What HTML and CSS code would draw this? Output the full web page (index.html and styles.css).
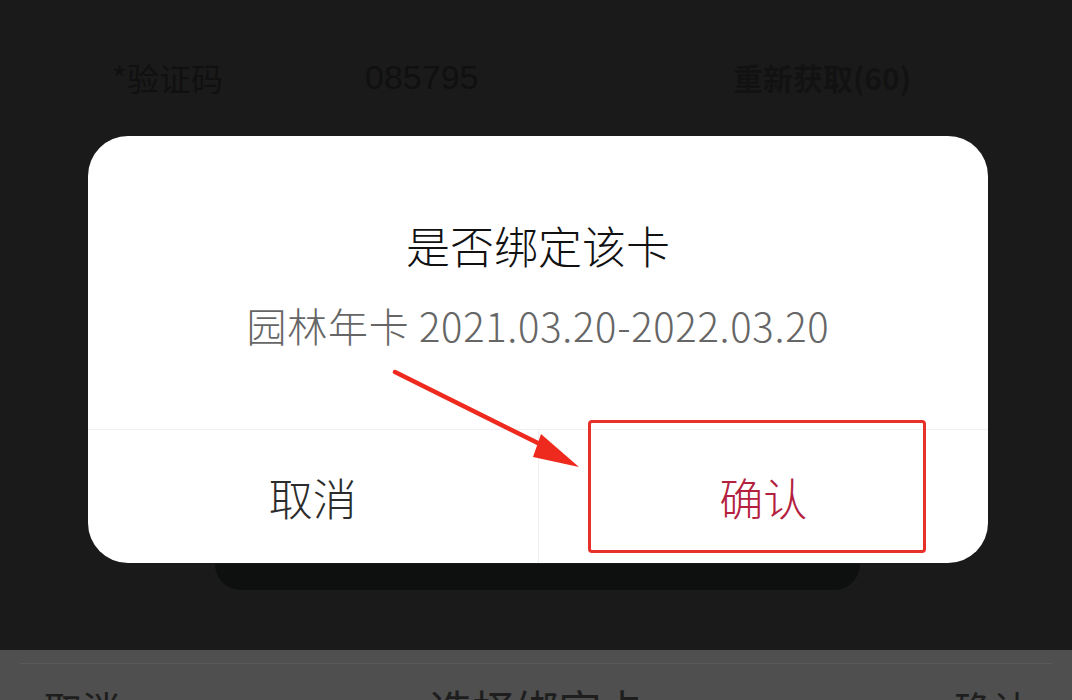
FILE: index.html
```html
<!DOCTYPE html>
<html lang="zh-CN">
<head>
    <meta charset="UTF-8">
    <meta name="viewport" content="width=device-width, initial-scale=1.0">
    <title>是否绑定该卡</title>
    <link rel="stylesheet" href="styles.css">
</head>
<body>

<div class="page">
    <div class="form-row">
        <span class="form-label">*验证码</span>
        <span class="form-value">085795</span>
        <span class="form-resend">重新获取(60)</span>
    </div>
    <div class="card-shadow"></div>
    <div class="sheet">
        <div class="sheet-head">
            <span class="sheet-btn">取消</span>
            <span class="sheet-title">选择绑定卡</span>
            <span class="sheet-btn">确认</span>
        </div>
    </div>
</div>

<div class="mask">
    <div class="dialog">
        <div class="dialog-body">
            <h2 class="dialog-title">是否绑定该卡</h2>
            <p class="dialog-desc">园林年卡 2021.03.20-2022.03.20</p>
        </div>
        <div class="dialog-actions">
            <button type="button" class="btn-cancel">取消</button>
            <button type="button" class="btn-ok">确认</button>
        </div>

        <!-- annotation drawn over the screenshot -->
        <div class="mark-box"></div>
        <svg class="mark-arrow" width="200" height="110" viewBox="0 0 200 110">
            <path d="M7 6 L168 86" stroke="#ee2a1f" stroke-width="4.5" stroke-linecap="round" fill="none"/>
            <path d="M153 68 L191 101 L145 91 Z" fill="#ee2a1f"/>
        </svg>
    </div>
</div>

</body>
</html>
```

FILE: styles.css
```css
/* Base */
body {
    margin: 0;
    height: 700px;
    overflow: hidden;
    background-color: #1a1a1a;
    font-family: "Noto Sans CJK SC", "Noto Sans", sans-serif;
}

/* Page behind the dialog */
.page {
    height: 700px;
    display: flex;
    flex-direction: column;
}
.form-row {
    display: flex;
    align-items: center;
    padding: 52px 0 0 112px;
    height: 50px;
    color: #101010;
    font-size: 32px;
}
.form-label {
    width: 253px;
}
.form-value {
    width: 368px;
    font-family: "Liberation Sans", sans-serif;
    font-size: 34px;
}
.form-resend {
    font-size: 30px;
    font-weight: bold;
    color: #121212;
}
.card-shadow {
    margin: 462px 212px 0 215px;
    height: 26px;
    border-radius: 0 0 30px 30px;
    background-color: #0d100e;
}
.sheet {
    margin-top: auto;
    height: 50px;
    box-sizing: border-box;
    overflow: hidden;
    background-color: #4f4f4f;
    padding: 13px 20px 0;
}
.sheet-head {
    display: flex;
    justify-content: space-between;
    align-items: flex-start;
    border-top: 1px solid #5a5a5a;
    padding: 0 22px 0 24px;
    color: #1e1e1e;
}
.sheet-btn {
    font-size: 38px;
    line-height: 1;
    margin-top: 25px;
}
.sheet-title {
    font-size: 43px;
    line-height: 1;
    margin-top: 23px;
}

/* Dialog */
.mask {
    position: absolute;
    top: 0;
    left: 0;
    right: 0;
    bottom: 0;
}
.dialog {
    position: absolute;
    left: 88px;
    top: 136px;
    width: 900px;
    height: 427px;
    background-color: #fff;
    border-radius: 40px;
    display: flex;
    flex-direction: column;
}
.dialog-body {
    height: 294px;
    box-sizing: border-box;
    padding-top: 78px;
    text-align: center;
    border-bottom: 1px solid #f0f0f0;
}
.dialog-title {
    margin: 0;
    font-size: 44px;
    font-weight: 300;
    line-height: 62px;
    color: #111;
}
.dialog-desc {
    margin: 24px 0 0;
    font-size: 40px;
    font-weight: 300;
    line-height: 50px;
    color: #666;
    letter-spacing: 0.7px;
}
.dialog-actions {
    flex: 1;
    display: flex;
}
.dialog-actions button {
    flex: 1;
    border: none;
    background: none;
    font-family: inherit;
    font-size: 44px;
    font-weight: 300;
    padding: 0;
}
.btn-cancel {
    color: #2c2c2c;
    border-right: 1px solid #f0f0f0 !important;
}
.btn-ok {
    color: #b4213f;
}

/* Red annotation */
.mark-box {
    position: absolute;
    left: 500px;
    top: 284px;
    width: 332px;
    height: 127px;
    border: 3px solid #e8302a;
    border-radius: 4px;
}
.mark-arrow {
    position: absolute;
    left: 300px;
    top: 230px;
}
```
